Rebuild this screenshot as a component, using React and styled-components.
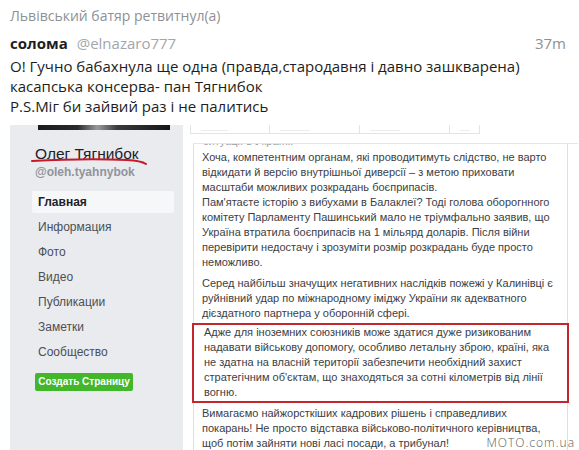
import React from "react";
import styled, { createGlobalStyle } from "styled-components";

const GlobalStyle = createGlobalStyle`
  html, body {
    margin: 0;
    padding: 0;
    background: #fff;
  }
  body {
    width: 579px;
    height: 450px;
    overflow: hidden;
  }
`;

const Tweet = styled.div`
  padding: 7px 0 0 10px;
  font-family: "Open Sans", "Noto Sans", sans-serif;
`;

const RetweetLine = styled.div`
  font-size: 14px;
  line-height: 18px;
  color: #8d9196;
`;

const Header = styled.div`
  display: flex;
  align-items: baseline;
  margin-top: 8px;
  padding-right: 13px;
  line-height: 20px;
  font-size: 15px;
`;

const Author = styled.span`
  font-weight: 700;
  color: #1c1e21;
`;

const Handle = styled.span`
  margin-left: 9px;
  color: #a3a6aa;
`;

const Time = styled.span`
  margin-left: auto;
  color: #8d9196;
`;

const Body = styled.div`
  margin-top: 3px;
  font-size: 15px;
  line-height: 20px;
  color: #1c1e21;
`;

const Media = styled.div`
  position: relative;
  margin-top: 9px;
  height: 325px;
  display: grid;
  grid-template-columns: 173px 10px 375px 1fr;
  overflow: hidden;
  font-family: "Liberation Sans", Arial, sans-serif;
`;

const Sidebar = styled.div`
  grid-column: 1;
  background: #e9ebee;
  padding-left: 22px;
  display: flex;
  flex-direction: column;
  align-items: flex-start;
`;

const PhotoEdge = styled.div`
  margin-left: 6px;
  width: 132px;
  height: 5px;
  background: linear-gradient(90deg, #1b1b1b 0%, #2a2a2a 30%, #9a9a9a 45%, #3a3a3a 60%, #161616 100%);
`;

const ProfileName = styled.div`
  position: relative;
  margin: 14px 0 0 3px;
  font-size: 15.5px;
  line-height: 20px;
  color: #1d2129;
`;

const Scribble = styled.svg`
  position: absolute;
  left: -4px;
  top: 14px;
`;

const ProfileHandle = styled.div`
  margin: 1px 0 0 3px;
  font-size: 12px;
  font-weight: 700;
  line-height: 14px;
  color: #90949c;
`;

const Nav = styled.div`
  margin-top: 12px;
  display: flex;
  flex-direction: column;
  gap: 3px;
`;

const NavItem = styled.div`
  width: 142px;
  height: 22px;
  box-sizing: border-box;
  padding-left: 6px;
  font-size: 12px;
  line-height: 22px;
  color: ${(p) => (p.$active ? "#1d2129" : "#4b4f56")};
  font-weight: ${(p) => (p.$active ? 700 : 400)};
  background: ${(p) => (p.$active ? "#f6f7f9" : "transparent")};
  border-radius: 2px;
`;

const CreateButton = styled.div`
  margin: 10px 0 0 3px;
  width: 98px;
  height: 18px;
  border-radius: 2px;
  background: #42b72a;
  color: #fff;
  font-size: 10px;
  font-weight: 700;
  line-height: 18px;
  text-align: center;
`;

const Card = styled.div`
  grid-column: 3;
  display: flex;
  flex-direction: column;
  background: #fff;
`;

const TabStrip = styled.div`
  display: flex;
  height: 9px;
  margin-left: -3px;
`;

const Tab = styled.div`
  width: ${(p) => p.$w}px;
  box-sizing: border-box;
  border: 1px solid #e2e4e7;
  border-top: none;
  border-left: ${(p) => (p.$first ? "1px solid #e2e4e7" : "none")};
  display: flex;
  align-items: flex-end;
  padding: 0 0 2px 10px;

  span {
    display: block;
    width: ${(p) => p.$w / 3}px;
    height: 1px;
    background: #ececec;
  }
`;

const TopRule = styled.div`
  margin-top: 9px;
  height: 1px;
  background: #e4e6ea;
  margin-right: -10px;
`;

const CutLine = styled.div`
  height: 4px;
  overflow: hidden;
  padding-left: 9px;
  border-left: 1px solid #dddfe2;
  border-right: 1px solid #dddfe2;

  div {
    margin-top: -9px;
    font-size: 11px;
    line-height: 13px;
    color: #9a9da2;
  }
`;

const Post = styled.div`
  flex: 1;
  padding-top: 2px;
  border-left: 1px solid #dddfe2;
  border-right: 1px solid #dddfe2;
  color: #3b3e44;
  font-size: 11px;
  line-height: 15px;
`;

const Para = styled.div`
  padding-left: 8px;
  margin-bottom: ${(p) => p.$gap || 0}px;
  white-space: nowrap;
`;

const Marked = styled.div`
  margin: 0 -2px 3px;
  border: 2px solid #c4262e;
  padding: 0 0 1px 10px;
  white-space: nowrap;
`;

const Watermark = styled.div`
  position: absolute;
  right: 4px;
  bottom: 0;
  font-family: "Open Sans", sans-serif;
  font-weight: 300;
  font-size: 12px;
  line-height: 14px;
  letter-spacing: 1px;
  color: #5c5c5c;
`;

const Lines = ({ lines }) => lines.map((l, i) => <div key={i}>{l}</div>);

const para1 = [
  "Хоча, компетентним органам, які проводитимуть слідство, не варто",
  "відкидати й версію внутрішньої диверсії – з метою приховати",
  "масштаби можливих розкрадань боєприпасів.",
  "Пам'ятаєте історію з вибухами в Балаклеї? Тоді голова оборогнного",
  "комітету Парламенту Пашинський мало не тріумфально заявив, що",
  "Україна втратила боєприпасів на 1 мільярд доларів. Після війни",
  "перевірити недостачу і зрозуміти розмір розкрадань буде просто",
  "неможливо.",
];

const para2 = [
  "Серед найбільш значущих негативних наслідків пожежі у Калинівці є",
  "руйнівний удар по міжнародному іміджу України як адекватного",
  "дієздатного партнера у оборонній сфері.",
];

const para3 = [
  "Адже для іноземних союзників може здатися дуже ризикованим",
  "надавати військову допомогу, особливо летальну зброю, країні, яка",
  "не здатна на власній території забезпечити необхідний захист",
  "стратегічним об'єктам, що знаходяться за сотні кілометрів від лінії",
  "вогню.",
];

const para4 = [
  "Вимагаємо найжорсткіших кадрових рішень і справедливих",
  "покарань! Не просто відставка військово-політичного керівництва,",
  "щоб потім зайняти нові ласі посади, а трибунал!",
];

const navItems = ["Главная", "Информация", "Фото", "Видео", "Публикации", "Заметки", "Сообщество"];

export default function App() {
  return (
    <>
      <GlobalStyle />
      <Tweet>
        <RetweetLine>Львівський батяр ретвитнул(а)</RetweetLine>
        <Header>
          <Author>солома</Author>
          <Handle>@elnazaro777</Handle>
          <Time>37m</Time>
        </Header>
        <Body>
          <div>О! Гучно бабахнула ще одна (правда,стародавня і давно зашкварена)</div>
          <div>касапська консерва- пан Тягнибок</div>
          <div>P.S.Міг би зайвий раз і не палитись</div>
        </Body>
        <Media>
          <Sidebar>
            <PhotoEdge />
            <ProfileName>
              Олег Тягнибок
              <Scribble width="118" height="10" viewBox="0 0 118 10">
                <path
                  d="M1 3 C 30 1.5, 70 1, 96 2 C 106 2.5, 112 4, 115 6"
                  fill="none"
                  stroke="#c8192b"
                  strokeWidth="2"
                  strokeLinecap="round"
                />
              </Scribble>
            </ProfileName>
            <ProfileHandle>@oleh.tyahnybok</ProfileHandle>
            <Nav>
              {navItems.map((n, i) => (
                <NavItem key={n} $active={i === 0}>
                  {n}
                </NavItem>
              ))}
            </Nav>
            <CreateButton>Создать Страницу</CreateButton>
          </Sidebar>
          <Card>
            <TabStrip>
              <Tab $w={80} $first><span /></Tab>
              <Tab $w={90}><span /></Tab>
              <Tab $w={90}><span /></Tab>
              <Tab $w={30}><span /></Tab>
            </TabStrip>
            <TopRule />
            <CutLine>
              <div>ситуації в Україні.</div>
            </CutLine>
            <Post>
              <Para $gap={6}>
                <Lines lines={para1} />
              </Para>
              <Para $gap={2}>
                <Lines lines={para2} />
              </Para>
              <Marked>
                <Lines lines={para3} />
              </Marked>
              <Para>
                <Lines lines={para4} />
              </Para>
            </Post>
          </Card>
          <Watermark>MOTO.com.ua</Watermark>
        </Media>
      </Tweet>
    </>
  );
}
